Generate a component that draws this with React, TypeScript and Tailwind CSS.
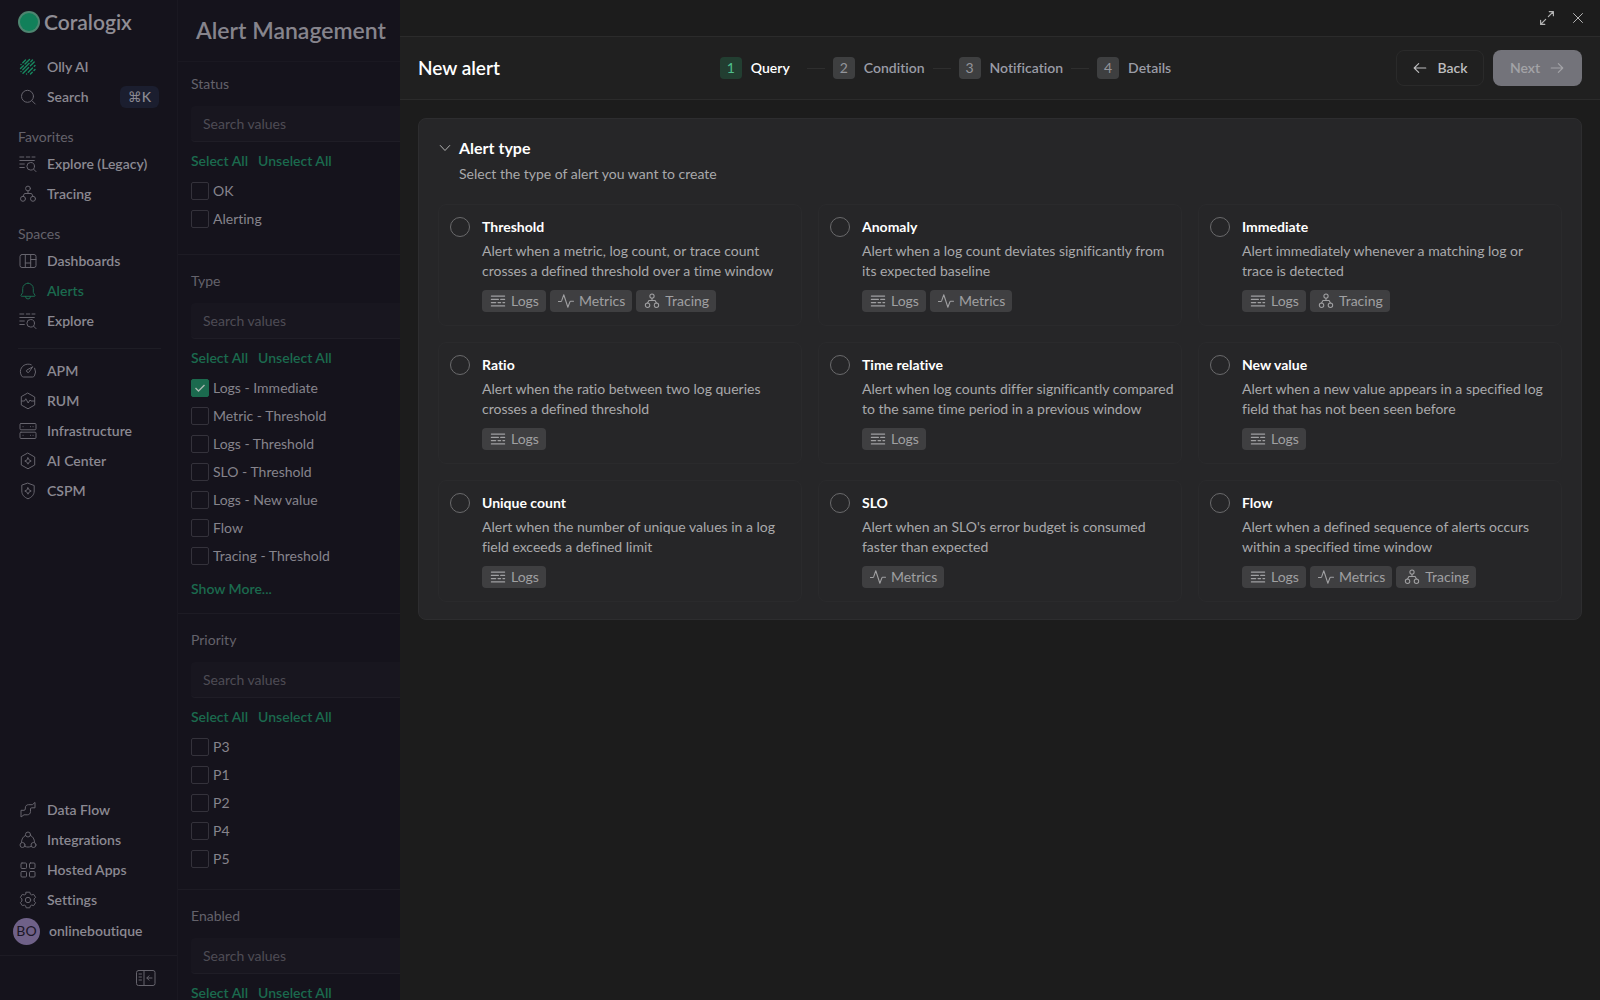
import React, { ReactNode, useState } from "react";

type IconProps = { className?: string };

type NavEntry = {
  label: string;
  icon: ReactNode;
  active?: boolean;
  shortcut?: string;
};

type FilterGroup = {
  title: string;
  values: string[];
  checked?: string[];
  more?: boolean;
};

type Source = "Logs" | "Metrics" | "Tracing";

type AlertType = {
  name: string;
  description: string;
  sources: Source[];
};

const Svg = ({
  className = "size-[18px]",
  children,
}: IconProps & { children: ReactNode }) => (
  <svg
    viewBox="0 0 18 18"
    fill="none"
    stroke="currentColor"
    strokeLinecap="round"
    strokeLinejoin="round"
    className={`shrink-0 ${className}`}
    aria-hidden="true"
  >
    {children}
  </svg>
);

const OllyIcon = () => (
  <Svg className="size-[18px] text-[#17885f]">
    <g strokeWidth="1.4">
      <path d="M2 6.500 6.500 2" strokeDasharray=".1 2.400 8" />
      <path d="M1.500 10.500 10.500 1.500" strokeDasharray="4 2.400 9" />
      <path d="M2 13.500 13.500 2" strokeDasharray=".1 2.400 9 2.400 4" />
      <path d="M4 15.200 15.200 4" strokeDasharray="8 2.400 8" />
      <path d="M7.500 16 16 7.500" strokeDasharray=".1 2.400 6 2.400 2" />
      <path d="M11.500 16 16 11.500" strokeDasharray="2.500 2.400 4" />
    </g>
  </Svg>
);

const SearchIcon = () => (
  <Svg>
    <circle cx="8.500" cy="8.300" r="6" />
    <path d="m13 12.800 3.200 3.200" />
  </Svg>
);

const ExploreIcon = () => (
  <Svg>
    <path d="M.8 2h4M7.300 2h3.500M13 2h3M.8 5.500h14.500M.8 9h4.500M.8 12.500h4.500" />
    <circle cx="11.700" cy="11.300" r="3.800" />
    <path d="m14.600 14.200 2.400 2.400" />
  </Svg>
);

const TracingIcon = ({ className }: IconProps) => (
  <Svg className={className}>
    <circle cx="9" cy="3.500" r="2.400" />
    <circle cx="4" cy="13.800" r="2.500" />
    <circle cx="14" cy="13.800" r="2.500" />
    <path d="M9 6v2.500M4 11.200 5.500 8.500h7L14 11.200" />
  </Svg>
);

const DashboardsIcon = () => (
  <Svg>
    <rect x="1" y="2.500" width="16" height="13" rx="2" />
    <path d="M6.300 2.500v13M11.700 2.500v13M6.300 11h5.400M11.700 7.500H17" />
  </Svg>
);

const BellIcon = () => (
  <Svg>
    <path d="M9 1.200a5.300 5.300 0 0 0-5.300 5.300v4L2 13.300c-.3.500 0 1 .6 1h12.800c.6 0 .9-.5.600-1l-1.700-2.800v-4A5.300 5.300 0 0 0 9 1.200Z" />
    <path d="M6.500 14.500a2.500 2.500 0 0 0 5 0" />
  </Svg>
);

const GaugeIcon = () => (
  <Svg>
    <path d="M12.300 2.800A7.600 7.600 0 0 0 1.400 9.600c0 1.600.4 3 1.200 4.300.4.700 1 1.100 1.800 1.100h9.200c.8 0 1.400-.4 1.800-1.100a8 8 0 0 0 .3-7.700" />
    <path d="m13.500 5-3.200 4.800a1.500 1.500 0 1 1-2.200-2L13.500 5Z" />
  </Svg>
);

const hexagon = "M9 1.200 15.700 5v8L9 16.800 2.300 13V5Z";
const sparkle = "M9 5.800 10.100 7.900 12.200 9 10.100 10.100 9 12.200 7.900 10.100 5.800 9 7.900 7.900Z";

const RumIcon = () => (
  <Svg>
    <path d={hexagon} />
    <path d="M2.300 9h3.200l1.300-2.300L9.200 11l1.800-3 1 1h3.700" />
  </Svg>
);

const ServerIcon = () => (
  <Svg>
    <rect x="1" y="1.500" width="16" height="6.300" rx="1" />
    <rect x="1" y="10.200" width="16" height="6.300" rx="1" />
    <path d="M4 4.700h.1M4 13.300h.1M11.500 4.700h.1M14 4.700h.1M11.500 13.300h.1M14 13.300h.1" />
  </Svg>
);

const AiCenterIcon = () => (
  <Svg>
    <path d={hexagon} />
    <path d={sparkle} />
  </Svg>
);

const ShieldIcon = () => (
  <Svg>
    <path d="M9 1.200 15.200 3.500v5.500c0 3.800-2.600 6.400-6.200 7.800C5.400 15.400 2.800 12.800 2.800 9V3.500Z" />
    <path d={sparkle} />
  </Svg>
);

const DataFlowIcon = () => (
  <Svg>
    <path d="M16 1.800v5h-3.300c-.8 0-1.200.5-1.200 1.200v2.500c0 2-1.200 3.300-3.200 3.300H5L2 16V9.300h3c.8 0 1.300-.5 1.300-1.300V7c0-2 1.300-3.300 3.300-3.300H13Z" />
  </Svg>
);

const IntegrationsIcon = () => (
  <Svg>
    <circle cx="9" cy="3.500" r="2.500" />
    <circle cx="3.500" cy="14" r="2.500" />
    <circle cx="14.500" cy="14" r="2.500" />
    <path d="M6.600 4.400C4.100 5.500 2.500 8 2.500 11.300M11.400 4.400c2.500 1.100 4.100 3.600 4.100 6.900M6 15.500c2 .8 4 .8 6 0" />
  </Svg>
);

const AppsIcon = () => (
  <Svg>
    <rect x="2" y="2" width="5.500" height="5.500" rx="1" />
    <rect x="10.500" y="2" width="5.500" height="5.500" rx="1" />
    <rect x="2" y="10.500" width="5.500" height="5.500" rx="1" />
    <rect x="10.500" y="10.500" width="5.500" height="5.500" rx="1" />
  </Svg>
);

const SettingsIcon = () => (
  <Svg>
    <path d="M7.200 1.200h3.600l.6 2 1.300.7 2-.5 1.900 3-1.500 1.500v2.200l1.500 1.500-1.900 3-2-.5-1.300.7-.6 2H7.200l-.6-2-1.300-.7-2 .5-1.900-3 1.500-1.500V7.900L1.400 6.400l1.900-3 2 .5 1.300-.7Z" />
    <circle cx="9" cy="9" r="2.700" />
  </Svg>
);

const LogsIcon = ({ className }: IconProps) => (
  <Svg className={className}>
    <path d="M1.500 3.500h15M1.500 7.200h8M12 7.200h4.500M1.500 10.800h5M9 10.800h3M14.500 10.800h2M1.500 14.500h15" />
  </Svg>
);

const MetricsIcon = ({ className }: IconProps) => (
  <Svg className={className}>
    <path d="M.5 9.500h2.700c.4 0 .7-.2.900-.6L6.500 2l4.600 14 2.300-6.200c.1-.3.400-.5.800-.5h3.300" />
  </Svg>
);

const sourceIcons: Record<Source, ReactNode> = {
  Logs: <LogsIcon className="size-4 stroke-[1.2]" />,
  Metrics: <MetricsIcon className="size-4 stroke-[1.2]" />,
  Tracing: <TracingIcon className="size-4 stroke-[1.2]" />,
};

const topNav: NavEntry[] = [
  { label: "Olly AI", icon: <OllyIcon /> },
  { label: "Search", icon: <SearchIcon />, shortcut: "⌘K" },
];

const favorites: NavEntry[] = [
  { label: "Explore (Legacy)", icon: <ExploreIcon /> },
  { label: "Tracing", icon: <TracingIcon /> },
];

const spaces: NavEntry[] = [
  { label: "Dashboards", icon: <DashboardsIcon /> },
  { label: "Alerts", icon: <BellIcon />, active: true },
  { label: "Explore", icon: <ExploreIcon /> },
];

const products: NavEntry[] = [
  { label: "APM", icon: <GaugeIcon /> },
  { label: "RUM", icon: <RumIcon /> },
  { label: "Infrastructure", icon: <ServerIcon /> },
  { label: "AI Center", icon: <AiCenterIcon /> },
  { label: "CSPM", icon: <ShieldIcon /> },
];

const bottomNav: NavEntry[] = [
  { label: "Data Flow", icon: <DataFlowIcon /> },
  { label: "Integrations", icon: <IntegrationsIcon /> },
  { label: "Hosted Apps", icon: <AppsIcon /> },
  { label: "Settings", icon: <SettingsIcon /> },
];

const filterGroups: FilterGroup[] = [
  { title: "Status", values: ["OK", "Alerting"] },
  {
    title: "Type",
    values: [
      "Logs - Immediate",
      "Metric - Threshold",
      "Logs - Threshold",
      "SLO - Threshold",
      "Logs - New value",
      "Flow",
      "Tracing - Threshold",
    ],
    checked: ["Logs - Immediate"],
    more: true,
  },
  { title: "Priority", values: ["P3", "P1", "P2", "P4", "P5"] },
  { title: "Enabled", values: [] },
];

const steps = ["Query", "Condition", "Notification", "Details"];

const alertTypes: AlertType[] = [
  {
    name: "Threshold",
    description:
      "Alert when a metric, log count, or trace count crosses a defined threshold over a time window",
    sources: ["Logs", "Metrics", "Tracing"],
  },
  {
    name: "Anomaly",
    description:
      "Alert when a log count deviates significantly from its expected baseline",
    sources: ["Logs", "Metrics"],
  },
  {
    name: "Immediate",
    description:
      "Alert immediately whenever a matching log or trace is detected",
    sources: ["Logs", "Tracing"],
  },
  {
    name: "Ratio",
    description:
      "Alert when the ratio between two log queries crosses a defined threshold",
    sources: ["Logs"],
  },
  {
    name: "Time relative",
    description:
      "Alert when log counts differ significantly compared to the same time period in a previous window",
    sources: ["Logs"],
  },
  {
    name: "New value",
    description:
      "Alert when a new value appears in a specified log field that has not been seen before",
    sources: ["Logs"],
  },
  {
    name: "Unique count",
    description:
      "Alert when the number of unique values in a log field exceeds a defined limit",
    sources: ["Logs"],
  },
  {
    name: "SLO",
    description:
      "Alert when an SLO's error budget is consumed faster than expected",
    sources: ["Metrics"],
  },
  {
    name: "Flow",
    description:
      "Alert when a defined sequence of alerts occurs within a specified time window",
    sources: ["Logs", "Metrics", "Tracing"],
  },
];

const NavList = ({ items }: { items: NavEntry[] }) => (
  <ul>
    {items.map((item) => (
      <li key={item.label}>
        <a
          href="#"
          className={`flex h-[30px] items-center gap-[10px] pl-[19px] pr-[18px] font-semibold ${
            item.active ? "text-[#1b6a4e]" : "text-[#8b8992]"
          }`}
        >
          <span className={item.active ? "" : "text-[#66646d]"}>
            {item.icon}
          </span>
          <span className="whitespace-nowrap">{item.label}</span>
          {item.shortcut && (
            <kbd className="ml-auto flex h-[22px] w-[39px] items-center justify-center rounded-md bg-[#1b1e2f] font-[Lato,'DejaVu_Sans',sans-serif] font-medium">
              {item.shortcut}
            </kbd>
          )}
        </a>
      </li>
    ))}
  </ul>
);

const NavHeading = ({ children }: { children: ReactNode }) => (
  <h2 className="mt-[13px] h-6 pl-[18px] leading-6 text-[#64626b]">
    {children}
  </h2>
);

const Sidebar = () => (
  <nav className="flex w-[178px] shrink-0 flex-col border-r border-[#1a1821]">
    <div className="flex h-11 items-center gap-1 pl-[18px]">
      <svg viewBox="0 0 22 22" className="size-[22px]" aria-hidden="true">
        <circle cx="11" cy="11" r="11" fill="#4e8570" />
        <circle cx="11" cy="11" r="9" fill="#11805a" />
      </svg>
      <span className="text-[21px] font-semibold leading-6 text-[#8f8d94]">
        Coralogix
      </span>
    </div>
    <div className="pt-2">
      <NavList items={topNav} />
      <NavHeading>Favorites</NavHeading>
      <NavList items={favorites} />
      <NavHeading>Spaces</NavHeading>
      <NavList items={spaces} />
      <hr className="mb-[7px] ml-[18px] mr-4 mt-3 border-[#1e1d25]" />
      <NavList items={products} />
    </div>
    <div className="mt-auto">
      <NavList items={bottomNav} />
      <div className="mb-2 flex h-8 items-center gap-[9px] pl-[13px] font-semibold text-[#8b8992]">
        <span className="flex size-[27px] items-center justify-center rounded-full bg-[#6f6188] font-normal text-[#1b1626]">
          BO
        </span>
        onlineboutique
      </div>
    </div>
    <div className="flex h-[45px] items-center justify-end border-t border-[#1d1b24] pr-[21px] text-[#66646d]">
      <button type="button" aria-label="Collapse sidebar">
        <svg
          viewBox="0 0 20 16"
          fill="none"
          stroke="currentColor"
          strokeLinecap="round"
          className="h-4 w-5"
        >
          <rect x=".5" y=".5" width="18.500" height="15" rx="2" />
          <path d="M8 .5v15M3 4h2.500M3 7h2.500M3 10h2.500M16 8h-5M13 5.800 10.800 8 13 10.200" />
        </svg>
      </button>
    </div>
  </nav>
);

const FilterSection = ({ group }: { group: FilterGroup }) => {
  const [selected, setSelected] = useState<string[]>(group.checked ?? []);

  const toggle = (value: string) =>
    setSelected((prev) =>
      prev.includes(value) ? prev.filter((v) => v !== value) : [...prev, value]
    );

  return (
    <section
      className={`border-b border-[#1d1b24] pl-[13px] pt-4 first:pb-[21px] first:pt-3 ${
        group.more ? "pb-[13px]" : "pb-4"
      }`}
    >
      <h2 className="leading-5 text-[#64626b]">{group.title}</h2>
      <input
        type="text"
        aria-label={`Search ${group.title}`}
        placeholder="Search values"
        className="mt-3 block h-9 w-full rounded border-b border-[#1f1d26] bg-[#18161f] px-3 text-[#8b8992] placeholder:text-[#4e4c55]"
      />
      <div className="mt-2 flex h-[22px] items-center gap-[10px] font-semibold text-[#1b6a4e]">
        <button type="button" onClick={() => setSelected(group.values)}>
          Select All
        </button>
        <button type="button" onClick={() => setSelected([])}>
          Unselect All
        </button>
      </div>
      <div className="mt-[5px]">
        {group.values.map((value) => (
          <label
            key={value}
            className="flex h-7 items-center gap-1 text-[#86848c]"
          >
            <span className="grid size-[18px] place-items-center">
              <input
                type="checkbox"
                checked={selected.includes(value)}
                onChange={() => toggle(value)}
                className="peer col-start-1 row-start-1 size-[18px] appearance-none rounded-xs border border-[#34323b] checked:border-[#1b6a4e] checked:bg-[#1b6a4e]"
              />
              <svg
                viewBox="0 0 18 18"
                fill="none"
                stroke="currentColor"
                strokeWidth="1.4"
                className="pointer-events-none invisible col-start-1 row-start-1 size-[18px] text-[#a9b8b1] peer-checked:visible"
              >
                <path d="m4.500 9 3 3 6-6" />
              </svg>
            </span>
            {value}
          </label>
        ))}
      </div>
      {group.more && (
        <button
          type="button"
          className="mt-2 block h-[22px] font-semibold text-[#1b6a4e]"
        >
          Show More...
        </button>
      )}
    </section>
  );
};

const Filters = () => (
  <div className="w-[300px] shrink-0">
    <header className="flex h-[62px] items-center border-b border-[#1a1821] pl-[18px]">
      <h1 className="whitespace-nowrap text-[23px] font-semibold text-[#86848c]">
        Alert Management
      </h1>
    </header>
    <div>
      {filterGroups.map((group) => (
        <FilterSection key={group.title} group={group} />
      ))}
    </div>
  </div>
);

const Stepper = () => (
  <ol className="flex items-center">
    {steps.map((step, i) => (
      <li key={step} className="flex items-center">
        {i > 0 && <span className="mx-2 h-px w-[18px] bg-[#2e2e2e]" />}
        <span
          className={`flex size-[22px] items-center justify-center rounded ${
            i === 0
              ? "bg-[#223e31] text-[#4fc08d]"
              : "bg-[#3e3f40] text-[#93959b]"
          }`}
        >
          {i + 1}
        </span>
        <span
          className={`ml-[9px] min-w-12 font-semibold ${
            i === 0 ? "text-white" : "text-[#9a9ca6]"
          }`}
        >
          {step}
        </span>
      </li>
    ))}
  </ol>
);

const AlertOption = ({ type }: { type: AlertType }) => (
  <label className="flex min-h-[122px] gap-3 rounded-lg border border-[#2a2a2c] py-3 pl-[11px] pr-1">
    <input
      type="radio"
      name="alert-type"
      className="size-5 shrink-0 appearance-none rounded-full border border-[#6a6a6c] checked:border-[6px] checked:border-[#4fc08d]"
    />
    <span className="flex flex-col">
      <span className="font-bold leading-5 text-white">{type.name}</span>
      <span className="mt-1 leading-5 text-[#a9a9ab]">{type.description}</span>
      <span className="mt-[9px] flex gap-1">
        {type.sources.map((source) => (
          <span
            key={source}
            className="flex h-[22px] items-center gap-[5px] rounded bg-[#3f3f41] pl-2 pr-[7px] text-[#a0a0a2]"
          >
            {sourceIcons[source]}
            {source}
          </span>
        ))}
      </span>
    </span>
  </label>
);

const NewAlertDrawer = () => (
  <aside
    role="dialog"
    aria-label="New alert"
    className="fixed inset-y-0 right-0 flex w-3/4 flex-col bg-[#1c1c1c]"
  >
    <div className="flex h-[37px] items-center justify-end gap-[14px] border-b border-[#2b2b2b] pr-[13px] text-[#b4b4b4]">
      <button type="button" aria-label="Expand">
        <Svg className="size-4 stroke-[1.3]">
          <path d="M10.500 7.500 16 2M11.500 1.800H16.200V6.500M7.500 10.500 2 16M1.800 11.500V16.200H6.500" />
        </Svg>
      </button>
      <button type="button" aria-label="Close">
        <Svg className="size-[18px]">
          <path d="m4.500 4.500 9 9M13.500 4.500l-9 9" />
        </Svg>
      </button>
    </div>
    <header className="flex h-[63px] shrink-0 items-center justify-between border-b border-[#2b2b2b] bg-[#202020] px-[18px]">
      <h1 className="text-[19px] font-semibold leading-6 text-white">
        New alert
      </h1>
      <Stepper />
      <div className="flex gap-[9px]">
        <button
          type="button"
          className="flex h-9 w-[88px] items-center justify-center gap-[9px] rounded-lg border border-[#2a2a2a] font-semibold text-[#bdbdbf]"
        >
          <Svg className="size-4 stroke-[1.3]">
            <path d="M15.500 9H2.500M7.500 4 2.500 9l5 5" />
          </Svg>
          Back
        </button>
        <button
          type="button"
          className="flex h-9 w-[89px] items-center justify-center gap-[9px] rounded-lg bg-[#73737a] font-semibold text-[#a3a3a7]"
        >
          Next
          <Svg className="size-4 stroke-[1.3]">
            <path d="M2.500 9h13M10.500 4l5 5-5 5" />
          </Svg>
        </button>
      </div>
    </header>
    <main className="p-[18px]">
      <section className="rounded-lg border border-[#2d2d2f] bg-[#262628] px-[19px] pb-[17px] pt-[17px]">
        <div className="flex items-center gap-2">
          <button type="button" aria-label="Collapse alert type">
            <svg
              viewBox="0 0 12 12"
              fill="none"
              stroke="currentColor"
              strokeLinecap="round"
              className="ml-px size-3 text-[#b4b4b4]"
            >
              <path d="m1.300 3.500 4.700 5 4.700-5" />
            </svg>
          </button>
          <h2 className="text-base font-bold leading-6 text-white">
            Alert type
          </h2>
        </div>
        <p className="mt-1 pl-[21px] leading-5 text-[#a9a9ab]">
          Select the type of alert you want to create
        </p>
        <div className="mt-5 grid grid-cols-3 gap-4">
          {alertTypes.map((type) => (
            <AlertOption key={type.name} type={type} />
          ))}
        </div>
      </section>
    </main>
  </aside>
);

const App = () => (
  <div className="flex h-screen overflow-hidden bg-[#15131c] font-[Lato,sans-serif] text-sm [font-variant-ligatures:no-common-ligatures]">
    <Sidebar />
    <Filters />
    <NewAlertDrawer />
  </div>
);

export default App;
